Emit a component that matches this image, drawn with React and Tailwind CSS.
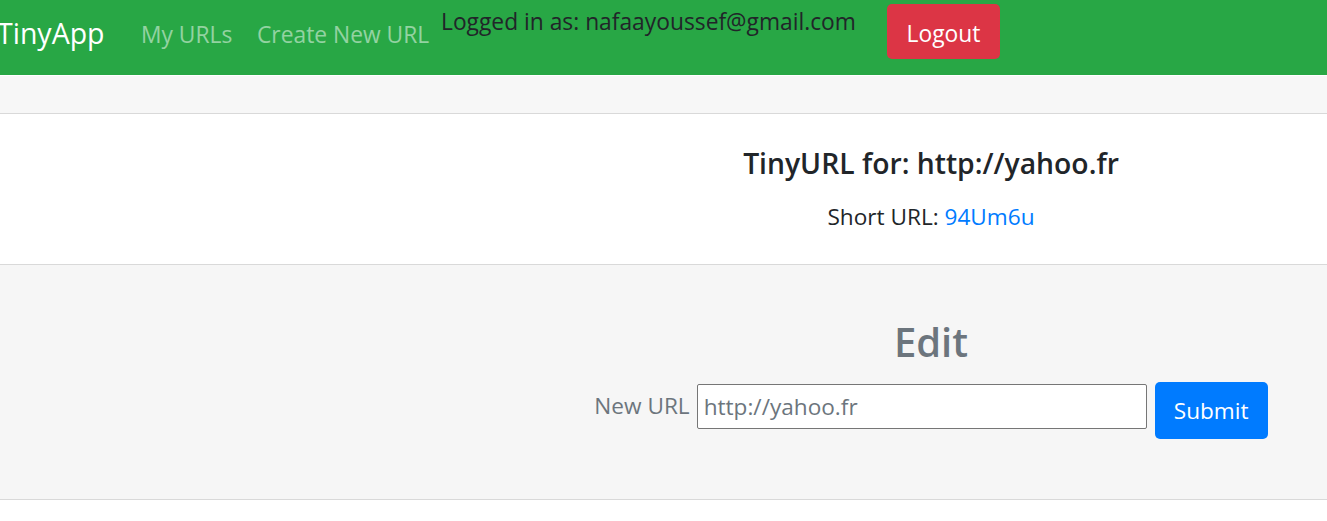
export default function App() {
  return (
    <div className="min-h-[521px] bg-white text-[#212529] overflow-hidden" style={{ fontFamily: '"Open Sans", "Noto Sans", sans-serif' }}>
      <nav className="h-[75px] bg-[#28a745] flex items-start">
        <div className="w-[141px] shrink-0">
          <span className="block ml-[-3px] mt-[12px] text-[28.5px] leading-[42px] text-white whitespace-nowrap">TinyApp</span>
        </div>
        <div className="w-[116px] shrink-0">
          <a className="block mt-[17px] text-[22.8px] leading-[36px] text-white/50 whitespace-nowrap">My URLs</a>
        </div>
        <div className="w-[184px] shrink-0">
          <a className="block mt-[17px] text-[22.8px] leading-[36px] text-white/50 whitespace-nowrap">Create New URL</a>
        </div>
        <div className="w-[446px] shrink-0">
          <span className="block mt-[4px] text-[22.8px] leading-[36px] text-[#212529] whitespace-nowrap">Logged in as: nafaayoussef@gmail.com</span>
        </div>
        <button className="mt-[4px] h-[55px] w-[113px] shrink-0 rounded-[5px] bg-[#dc3545] text-white text-[22.8px] pt-[5px] flex items-center justify-center">Logout</button>
      </nav>
      <div className="h-px bg-white" />
      <div className="h-[38px] bg-[#f7f7f7] border-b border-[#d9d9d9]" />
      <div className="h-[151px] border-b border-[#d9d9d9] bg-white pl-[535px] flex flex-col items-center pt-[31px]">
        <h5 className="text-[28.3px] leading-[36px] font-semibold text-[#212529] whitespace-nowrap">TinyURL for: http://yahoo.fr</h5>
        <p className="mt-[18px] text-[22.6px] leading-[36px] whitespace-nowrap">
          Short URL: <a className="text-[#007bff]">94Um6u</a>
        </p>
      </div>
      <div className="h-[235px] border-b border-[#d9d9d9] bg-[#f6f6f6] pl-[535px] flex flex-col items-center pt-[53px]">
        <h3 className="text-[40px] leading-[48px] font-semibold text-[#6c757d]">Edit</h3>
        <form className="mt-[16px] flex items-start" onSubmit={(e) => e.preventDefault()}>
          <label className="mt-[6px] text-[22.6px] leading-[36px] text-[#6c757d] whitespace-nowrap">New URL</label>
          <input
            readOnly
            value="http://yahoo.fr"
            className="ml-[7px] mt-[2px] w-[450px] h-[45px] border border-[#767676] rounded-[2px] bg-white px-[6px] text-[22.6px] text-[#6c757d] outline-none"
            style={{ fontFamily: '"Open Sans", "Noto Sans", sans-serif' }}
          />
          <button className="ml-[8px] h-[57px] w-[113px] rounded-[5px] bg-[#007bff] text-white text-[22.6px] flex items-center justify-center">Submit</button>
        </form>
      </div>
    </div>
  );
}
